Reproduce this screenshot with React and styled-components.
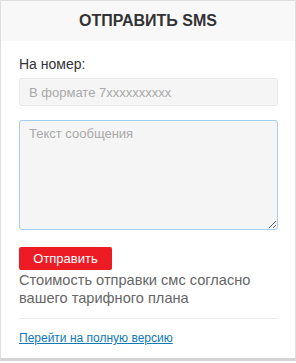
import React from 'react';
import styled, {createGlobalStyle} from 'styled-components';

const GlobalStyle = createGlobalStyle`
  body {
    margin: 0;
    background: #fff;
    font-family: "Liberation Sans", Arial, sans-serif;
  }
`;

const App = () => {
    return (
        <>
            <GlobalStyle/>
            <Card>
                <Header>Отправить SMS</Header>
                <Body>
                    <Label>На номер:</Label>
                    <PhoneInput placeholder="В формате 7xxxxxxxxxx"/>
                    <Message placeholder="Текст сообщения"/>
                    <SendButton>Отправить</SendButton>
                    <Note>Стоимость отправки смс согласно вашего тарифного плана</Note>
                    <Divider/>
                    <FullLink href="#">Перейти на полную версию</FullLink>
                </Body>
            </Card>
        </>
    )
}

const Card = styled.div`
  width: 296px;
  height: 361px;
  box-sizing: border-box;
  border: 1px solid #dedede;
  border-bottom: 3px solid #d4d4d4;
  background: #fff;
  display: flex;
  flex-direction: column;
`;

const Header = styled.div`
  height: 40px;
  background: #f8f8f8;
  display: flex;
  align-items: center;
  justify-content: center;
  text-transform: uppercase;
  font-size: 16px;
  font-weight: bold;
  color: #333;
`;

const Body = styled.div`
  padding: 15px 17px 0 18px;
  display: flex;
  flex-direction: column;
`;

const Label = styled.div`
  font-size: 14px;
  line-height: 17px;
  color: #333;
`;

const fieldBase = `
  box-sizing: border-box;
  width: 100%;
  background: #f5f5f5;
  border-radius: 3px;
  font-family: "Liberation Sans", Arial, sans-serif;
  font-size: 13px;
  color: #333;
  outline: none;
  &::placeholder {
    color: #a9a9a9;
  }
`;

const PhoneInput = styled.input`
  ${fieldBase};
  margin-top: 5px;
  height: 28px;
  border: 1px solid #e8e8e8;
  padding: 0 9px;
`;

const Message = styled.textarea`
  ${fieldBase};
  margin-top: 14px;
  height: 110px;
  border: 1px solid #a3cdf2;
  padding: 5px 9px;
  resize: vertical;
`;

const SendButton = styled.button`
  align-self: flex-start;
  margin-top: 17px;
  width: 93px;
  height: 23px;
  border: none;
  border-radius: 2px;
  background: #ed1c24;
  color: #fff;
  font-family: "Liberation Sans", Arial, sans-serif;
  font-size: 13px;
  padding: 0;
`;

const Note = styled.div`
  font-size: 14.6px;
  line-height: 18px;
  color: #666;
  margin-top: 1px;
`;

const Divider = styled.div`
  height: 1px;
  background: #ebebeb;
  margin-top: 11px;
`;

const FullLink = styled.a`
  margin-top: 11px;
  font-size: 12px;
  line-height: 16px;
  color: #1178b5;
  text-decoration: underline;
  align-self: flex-start;
`;

export default App;
